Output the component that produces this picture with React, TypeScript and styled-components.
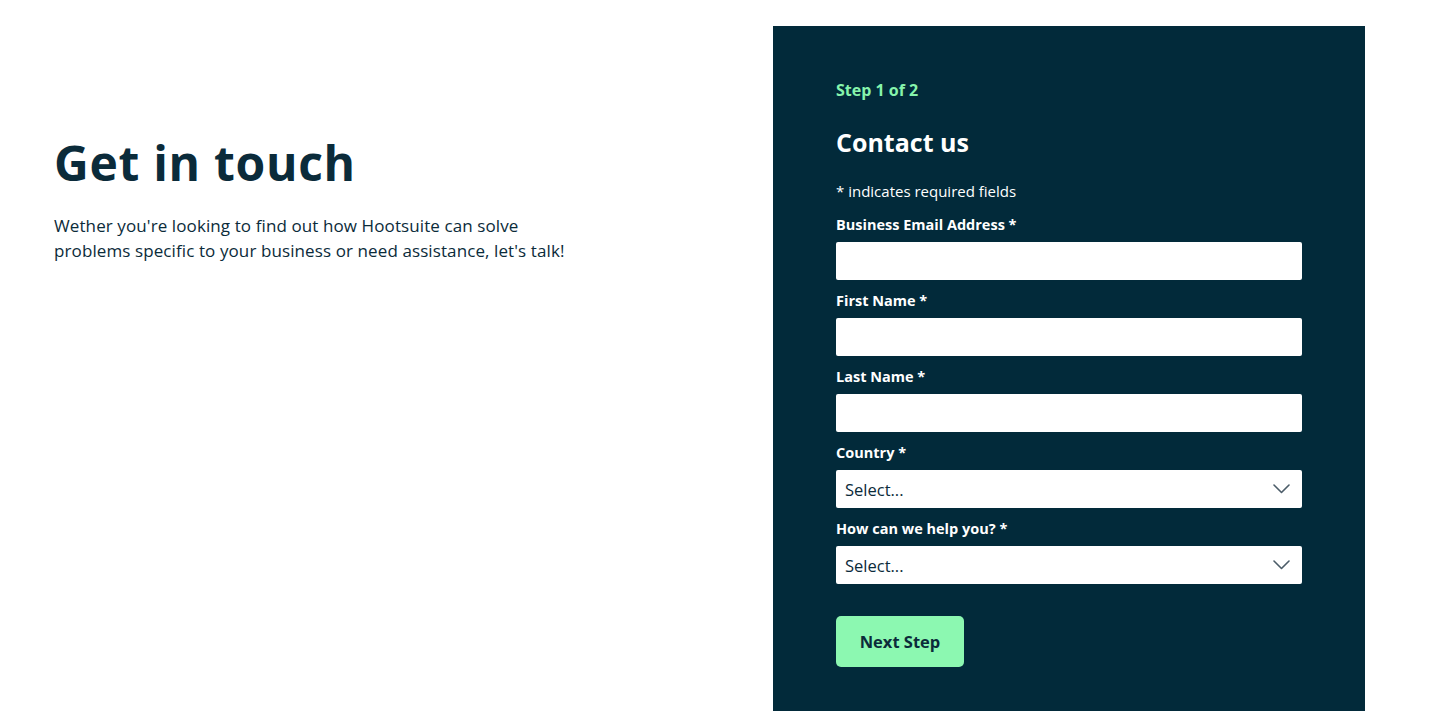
import styled, { createGlobalStyle } from 'styled-components';

const FONT = `"Open Sans", "Noto Sans", Arial, sans-serif`;

const GlobalStyle = createGlobalStyle`
  html, body {
    margin: 0;
    padding: 0;
    background: #ffffff;
    font-family: ${FONT};
    overflow: hidden;
  }
  * { box-sizing: border-box; }
`;

function Chevron() {
  return (
    <svg width="17" height="10" viewBox="0 0 17 10" fill="none">
      <polyline points="1,1 8.5,8.5 16,1" stroke="#4b5c68" strokeWidth="1.6" strokeLinecap="round" strokeLinejoin="round" />
    </svg>
  );
}

function App() {
  return (
    <>
      <GlobalStyle />
      <Page>
        <Intro>
          <Title>Get in touch</Title>
          <Lead>
            Wether you're looking to find out how Hootsuite can solve
            <br />
            problems specific to your business or need assistance, let's talk!
          </Lead>
        </Intro>
        <Panel>
          <Step>Step 1 of 2</Step>
          <FormTitle>Contact us</FormTitle>
          <Note>* indicates required fields</Note>
          <Fields>
            <Field>
              <Label>Business Email Address *</Label>
              <Input type="email" />
            </Field>
            <Field>
              <Label>First Name *</Label>
              <Input type="text" />
            </Field>
            <Field>
              <Label>Last Name *</Label>
              <Input type="text" />
            </Field>
            <Field>
              <Label>Country *</Label>
              <Select>
                <span>Select...</span>
                <Chevron />
              </Select>
            </Field>
            <Field>
              <Label>How can we help you? *</Label>
              <Select>
                <span>Select...</span>
                <Chevron />
              </Select>
            </Field>
          </Fields>
          <NextButton>Next Step</NextButton>
        </Panel>
      </Page>
    </>
  );
}

export default App;

const Page = styled.div`
  display: flex;
  align-items: flex-start;
  width: 1440px;
  height: 711px;
  padding-top: 26px;
  overflow: hidden;
`;

const Intro = styled.div`
  flex: 1;
  padding: 109px 0 0 54px;
  color: #0b2b3a;
`;

const Title = styled.h1`
  margin: 0;
  font-size: 48px;
  line-height: 56px;
  font-weight: 700;
  letter-spacing: 0.7px;
  color: #0b2b3a;
`;

const Lead = styled.p`
  margin: 22px 0 0;
  font-size: 17px;
  line-height: 25px;
  letter-spacing: 0.1px;
  color: #0b2b3a;
`;

const Panel = styled.div`
  width: 592px;
  height: 720px;
  margin-right: 75px;
  padding: 54px 63px 0;
  background: #022a3a;
  display: flex;
  flex-direction: column;
  align-items: flex-start;
`;

const Step = styled.div`
  font-size: 16px;
  line-height: 20px;
  font-weight: 700;
  color: #86f4ac;
`;

const FormTitle = styled.h2`
  margin: 27px 0 0;
  font-size: 25px;
  line-height: 30px;
  font-weight: 700;
  color: #ffffff;
`;

const Note = styled.div`
  margin-top: 24px;
  font-size: 15px;
  line-height: 20px;
  color: #ffffff;
`;

const Fields = styled.div`
  margin-top: 14px;
  width: 100%;
  display: flex;
  flex-direction: column;
  gap: 11px;
`;

const Field = styled.div`
  display: flex;
  flex-direction: column;
`;

const Label = styled.label`
  font-size: 14.5px;
  line-height: 20px;
  font-weight: 700;
  color: #ffffff;
  margin-bottom: 7px;
`;

const Input = styled.input`
  width: 100%;
  height: 38px;
  border: none;
  border-radius: 2px;
  background: #ffffff;
  padding: 0 9px;
  font-family: ${FONT};
  font-size: 16px;
  outline: none;
`;

const Select = styled.div`
  width: 100%;
  height: 38px;
  border-radius: 2px;
  background: #ffffff;
  padding: 0 12px 0 9px;
  display: flex;
  align-items: center;
  justify-content: space-between;
  font-size: 16.5px;
  color: #0b2b3a;
`;

const NextButton = styled.button`
  margin-top: 32px;
  width: 128px;
  height: 51px;
  border: none;
  border-radius: 5px;
  background: #8cf8b1;
  color: #0b2b3a;
  font-family: ${FONT};
  font-size: 16.5px;
  font-weight: 700;
  cursor: pointer;
`;
